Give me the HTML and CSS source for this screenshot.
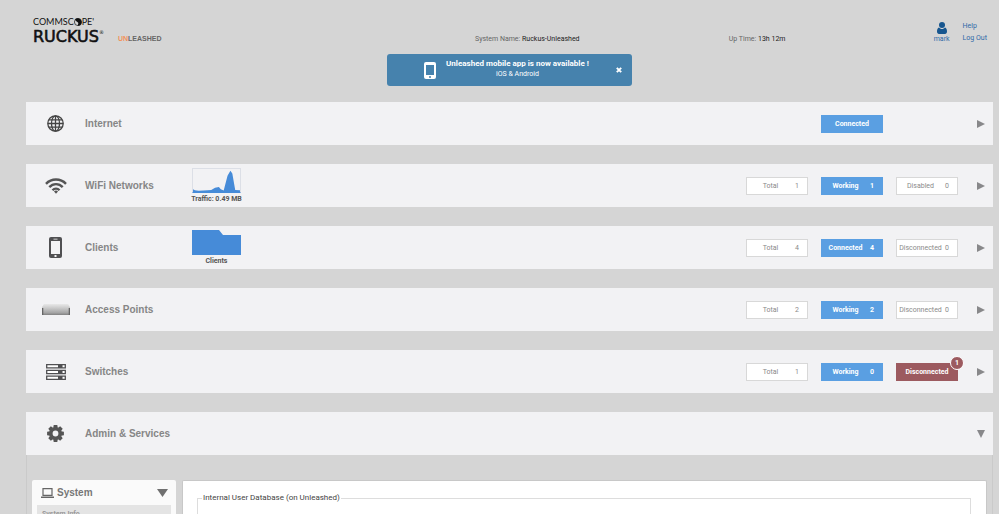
FILE: index.html
```
<!DOCTYPE html>
<html lang="en">
<head>
  <meta charset="UTF-8" />
  <meta name="viewport" content="width=device-width, initial-scale=1.0" />
  <title>Ruckus Unleashed</title>
  <link rel="stylesheet" href="styles.css">
</head>
<body>
  <div class="page">
    <header class="header">
      <div class="brand">
        <div class="logo">
          <div class="logo-top">COMMSC<svg class="logo-o" viewBox="0 0 8 8"><circle cx="4" cy="4" r="3.6" fill="none" stroke="#111" stroke-width=".7"/><path d="M1 1.6a3.8 3.8 0 0 1 6.6 2.4A3.8 3.8 0 0 1 4 7.8C3 7 5 6 4 4.600C3.400 3.600 2 3.600 1 1.600z" fill="#111"/></svg>PE'</div>
          <div class="logo-main">RUCKUS<sup>®</sup></div>
        </div>
        <div class="unleashed"><span>UN</span>LEASHED</div>
      </div>
      <div class="info">System Name: <b>Ruckus-Unleashed</b></div>
      <div class="info">Up Time: <b>13h 12m</b></div>
      <div class="account">
        <a class="user" href="#">
          <svg width="10" height="12" viewBox="0 0 10 12" fill="#17568f"><circle cx="5" cy="3" r="3"/><path d="M2 5.500C.6 6 0 7.500 0 9.500 0 11 .8 12 2 12h6c1.200 0 2-1 2-2.500C10 7.500 9.400 6 8 5.500 7.300 6.400 6.200 7 5 7S2.700 6.400 2 5.500z"/></svg>
          mark
        </a>
        <nav class="links">
          <a href="#">Help</a>
          <a href="#">Log Out</a>
        </nav>
      </div>
    </header>

    <div class="banner">
      <svg width="12" height="17" viewBox="0 0 12 17"><rect width="12" height="17" rx="2" fill="#fff"/><path d="M2 3h8v10H2z" fill="#4682ad"/><circle cx="6" cy="15" r="1" fill="#4682ad"/></svg>
      <div class="banner-text">
        <strong>Unleashed mobile app is now available !</strong>
        <span>iOS &amp; Android</span>
      </div>
      <button class="close" type="button" aria-label="Close">
        <svg width="6" height="6" viewBox="0 0 6 6"><path d="M.8.8l4.400 4.400M5.200.8L.8 5.200" stroke="#fff" stroke-width="1.900"/></svg>
      </button>
    </div>

    <main class="sections">
      <section class="row">
        <div class="icon">
          <svg width="17" height="17" viewBox="0 0 17 17" fill="none" stroke="#444" stroke-width="1.300"><circle cx="8.500" cy="8.500" r="7.700"/><ellipse cx="8.500" cy="8.500" rx="4" ry="7.700"/><path d="M8.500.8v15.400M.8 8.500h15.400M2 4.800h13M2 12.200h13"/></svg>
        </div>
        <h2>Internet</h2>
        <div class="chart"></div>
        <div class="stats">
          <button class="stat active single" type="button">Connected</button>
          <span class="stat-space"></span>
        </div>
        <button class="toggle" type="button" aria-label="Expand Internet"><svg width="8" height="8" viewBox="0 0 8 8"><path d="M0 0l8 4-8 4z"/></svg></button>
      </section>

      <section class="row">
        <div class="icon">
          <svg width="22" height="16" viewBox="0 0 22 16" fill="none" stroke="#555" stroke-width="2.400"><path d="M1 5.800C6.500.1 15.500.1 21 5.800M4.300 9.100c3.700-4 9.700-4 13.400 0M7.500 12.300c2-2.200 5-2.200 7 0"/><path d="M9 13.500c1-1.200 3-1.200 4 0l-2 2.200z" fill="#555" stroke="none"/></svg>
        </div>
        <h2>WiFi Networks</h2>
        <div class="chart">
          <svg class="plot boxed" viewBox="0 0 49 25" preserveAspectRatio="none"><path d="M0 25v-3l2 1 4 .6 9-.6 4-.2 4-2.300 4-1 2 2.500 3 1.300 4-16 3-5.500 2 3 3 18 5 .4V25z"/></svg>
          <span>Traffic: 0.49 MB</span>
        </div>
        <div class="stats">
          <button class="stat" type="button"><span>Total</span><span>1</span></button>
          <button class="stat active" type="button"><span>Working</span><span>1</span></button>
          <button class="stat" type="button"><span>Disabled</span><span>0</span></button>
        </div>
        <button class="toggle" type="button" aria-label="Expand WiFi Networks"><svg width="8" height="8" viewBox="0 0 8 8"><path d="M0 0l8 4-8 4z"/></svg></button>
      </section>

      <section class="row">
        <div class="icon">
          <svg width="13" height="21" viewBox="0 0 13 21"><rect width="13" height="21" rx="2" fill="#505052"/><path d="M2 4h9v13H2z" fill="#f2f2f4"/><path d="M4.500 1.700h4v.8h-4zM5.500 18h2v2h-2z" fill="#f2f2f4"/></svg>
        </div>
        <h2>Clients</h2>
        <div class="chart">
          <svg class="plot" viewBox="0 0 49 25" preserveAspectRatio="none"><path d="M0 0h27l4 5h18v20H0z"/></svg>
          <span>Clients</span>
        </div>
        <div class="stats">
          <button class="stat" type="button"><span>Total</span><span>4</span></button>
          <button class="stat active" type="button"><span>Connected</span><span>4</span></button>
          <button class="stat" type="button"><span>Disconnected</span><span>0</span></button>
        </div>
        <button class="toggle" type="button" aria-label="Expand Clients"><svg width="8" height="8" viewBox="0 0 8 8"><path d="M0 0l8 4-8 4z"/></svg></button>
      </section>

      <section class="row">
        <div class="icon">
          <svg width="28" height="11" viewBox="0 0 28 11">
            <defs><linearGradient id="ap" x1="0" y1="0" x2="0" y2="1"><stop offset="0" stop-color="#e8e8e8"/><stop offset=".3" stop-color="#d0d0d0"/><stop offset=".8" stop-color="#a4a4a4"/><stop offset="1" stop-color="#808080"/></linearGradient></defs>
            <path d="M2 0h24l2 3v8H0V3z" fill="url(#ap)"/><path d="M0 4h1.300v7H0zM26.700 4H28v7h-1.300z" fill="#666"/>
          </svg>
        </div>
        <h2>Access Points</h2>
        <div class="chart"></div>
        <div class="stats">
          <button class="stat" type="button"><span>Total</span><span>2</span></button>
          <button class="stat active" type="button"><span>Working</span><span>2</span></button>
          <button class="stat" type="button"><span>Disconnected</span><span>0</span></button>
        </div>
        <button class="toggle" type="button" aria-label="Expand Access Points"><svg width="8" height="8" viewBox="0 0 8 8"><path d="M0 0l8 4-8 4z"/></svg></button>
      </section>

      <section class="row">
        <div class="icon">
          <svg width="20" height="16" viewBox="0 0 20 16"><g fill="#fff" stroke="#505052" stroke-width="1.300"><path d="M.7.7h18.600v3.200H.7zM.7 6.400h18.600v3.200H.7zM.7 12.100h18.600v3.200H.7z"/></g><path d="M12 1h4.500v3H12zM12 6.500h4.500v3H12zM12 12h4.500v3H12z" fill="#505052"/></svg>
        </div>
        <h2>Switches</h2>
        <div class="chart"></div>
        <div class="stats">
          <button class="stat" type="button"><span>Total</span><span>1</span></button>
          <button class="stat active" type="button"><span>Working</span><span>0</span></button>
          <button class="stat alert single" type="button">Disconnected<span class="badge">1</span></button>
        </div>
        <button class="toggle" type="button" aria-label="Expand Switches"><svg width="8" height="8" viewBox="0 0 8 8"><path d="M0 0l8 4-8 4z"/></svg></button>
      </section>

      <section class="row">
        <div class="icon">
          <svg width="17" height="17" viewBox="-8.500 -8.500 17 17"><g fill="#555"><path id="t" d="M-1.800-8.400h3.600l.5 3h-4.600zM-1.800 8.400h3.600l.5-3h-4.600z"/><use href="#t" transform="rotate(45)"/><use href="#t" transform="rotate(90)"/><use href="#t" transform="rotate(135)"/></g><circle r="4.600" fill="none" stroke="#555" stroke-width="3.400"/></svg>
        </div>
        <h2>Admin &amp; Services</h2>
        <div class="chart"></div>
        <div class="stats"></div>
        <button class="toggle" type="button" aria-label="Collapse Admin &amp; Services"><svg width="8" height="8" viewBox="0 0 8 8"><path d="M0 0h8L4 8z"/></svg></button>
      </section>
    </main>

    <div class="admin">
      <aside class="sidebar">
        <button class="menu-head" type="button">
          <svg width="13" height="10" viewBox="0 0 13 10"><path d="M2 .6h9v6.800H2z" fill="none" stroke="#666" stroke-width="1.200"/><path d="M0 8.500h13V10H0z" fill="#666"/></svg>
          <span>System</span>
          <svg class="menu-arrow" width="11" height="8" viewBox="0 0 11 8"><path d="M0 0h11L5.500 8z" fill="#707070"/></svg>
        </button>
        <a class="menu-item" href="#">System Info</a>
      </aside>
      <div class="panel">
        <fieldset>
          <legend>Internal User Database (on Unleashed)</legend>
        </fieldset>
      </div>
    </div>
  </div>
</body>
</html>
```

FILE: styles.css
```
* {
  box-sizing: border-box;
}

body {
  margin: 0;
  background-color: #d5d5d5;
  font-family: Roboto, "Liberation Sans", Arial, sans-serif;
  font-size: 7px;
  line-height: 8px;
  color: #666;
}

a {
  color: #2f6aa8;
  text-decoration: none;
}

button {
  padding: 0;
  border: none;
  background: none;
  font: inherit;
  color: inherit;
  cursor: pointer;
}

svg {
  display: block;
}

.page {
  display: flex;
  flex-direction: column;
  height: 100vh;
  min-height: 500px;
  padding: 16px 6px 0 26px;
  overflow: hidden;
}

/* header */
.header {
  display: grid;
  grid-template-columns: 46fr 26fr 21fr auto;
  height: 38px;
  flex-shrink: 0;
}

.brand {
  display: flex;
  gap: 14px;
  padding-left: 7px;
  color: #111;
}

.logo-top {
  display: flex;
  align-items: center;
  font-family: Lato, sans-serif;
  font-size: 9px;
  line-height: 11px;
}

.logo-o {
  width: 8px;
  height: 8px;
}

.logo-main {
  display: flex;
  font-family: "DejaVu Sans", sans-serif;
  font-size: 16px;
  line-height: 19px;
  -webkit-text-stroke: 0.6px #111;
}

.logo-main sup {
  font-size: 5px;
  line-height: 10px;
  -webkit-text-stroke: 0;
}

.unleashed {
  padding-top: 19px;
  font-family: "Liberation Sans", Arial, sans-serif;
  font-weight: bold;
  color: #666;
}

.unleashed span {
  color: #f2935c;
}

.info {
  padding-top: 19px;
}

.info b {
  font-weight: normal;
  color: #222;
}

.account {
  display: flex;
  gap: 13px;
  padding: 6px 6px 0 0;
}

.user {
  display: flex;
  flex-direction: column;
  align-items: center;
  gap: 1px;
}

.links {
  display: flex;
  flex-direction: column;
  gap: 4px;
}

/* mobile app banner */
.banner {
  display: flex;
  align-items: center;
  justify-content: center;
  align-self: center;
  flex-shrink: 0;
  gap: 10px;
  height: 32px;
  padding: 0 10px 0 37px;
  border-radius: 3px;
  background-color: #4682ad;
  color: #fff;
}

.banner-text {
  display: flex;
  flex-direction: column;
  gap: 2px;
  padding-bottom: 2px;
  text-align: center;
}

.banner-text strong {
  font-size: 8px;
}

.close {
  padding-left: 17px;
}

/* status rows */
.sections {
  display: grid;
  gap: 19px;
  padding-top: 16px;
  flex-shrink: 0;
}

.row {
  display: flex;
  align-items: center;
  height: 43px;
  padding-right: 8px;
  background-color: #f2f2f4;
}

.icon {
  display: flex;
  justify-content: center;
  width: 59px;
}

.row h2 {
  width: 107px;
  margin: 0;
  font-family: "Liberation Sans", Arial, sans-serif;
  font-size: 10px;
  line-height: 12px;
  color: #868686;
}

.chart {
  display: flex;
  flex-direction: column;
  align-items: center;
  gap: 2px;
  width: 49px;
  font-weight: bold;
  white-space: nowrap;
  color: #555;
}

.plot {
  width: 100%;
  height: 25px;
  fill: #468bd8;
}

.boxed {
  border: 1px solid #dcdfe6;
  border-bottom-color: #468bd8;
}

.stats {
  display: flex;
  gap: 13px;
  margin-left: auto;
}

.stat,
.stat-space {
  width: 62px;
}

.stat {
  display: grid;
  grid-template-columns: 1fr 6px;
  align-items: center;
  height: 18px;
  padding-right: 7px;
  border: 1px solid #d8d8d8;
  background-color: #fff;
  color: #8a8a8a;
}

.active {
  border-color: #5a9fe2;
  background-color: #5a9fe2;
  color: #fff;
}

.single {
  position: relative;
  display: block;
  padding: 0;
}

.alert {
  border-color: #9c5a5f;
  background-color: #9c5a5f;
  color: #fff;
}

.active,
.alert {
  font-weight: bold;
}

.badge {
  position: absolute;
  top: -8px;
  right: -7px;
  width: 14px;
  height: 14px;
  border: 1px solid #fff;
  border-radius: 50%;
  background-color: #9c5a5f;
  line-height: 12px;
}

.toggle {
  margin-left: 19px;
}

.toggle svg {
  fill: #88888a;
}

/* admin area */
.admin {
  display: flex;
  flex: 1;
  gap: 6px;
  padding: 25px 5px 0;
  border: 1px solid #cacaca;
  border-width: 0 1px;
}

.sidebar {
  display: flex;
  flex-direction: column;
  gap: 5px;
  width: 144px;
  padding: 6px 5px 0;
  border-radius: 2px 2px 0 0;
  background-color: #fafafa;
}

.menu-head {
  display: flex;
  align-items: center;
  gap: 3px;
  padding: 0 3px 0 4px;
  font-family: "Liberation Sans", Arial, sans-serif;
  font-size: 10px;
  font-weight: bold;
  line-height: 14px;
  color: #777;
}

.menu-arrow {
  margin-left: auto;
}

.menu-item {
  padding: 5px;
  background-color: #e4e4e4;
  font-weight: bold;
  color: #999;
}

.panel {
  flex: 1;
  padding: 13px 15px 0 14px;
  border: 1px solid #c8c8c8;
  border-bottom: none;
  border-radius: 2px 2px 0 0;
  background-color: #fff;
}

fieldset {
  height: 100%;
  margin: 0;
  padding: 0 4px;
  border: 1px solid #ddd;
  border-bottom: none;
}

legend {
  padding: 0 1px;
  font-size: 8px;
  color: #444;
}
```
